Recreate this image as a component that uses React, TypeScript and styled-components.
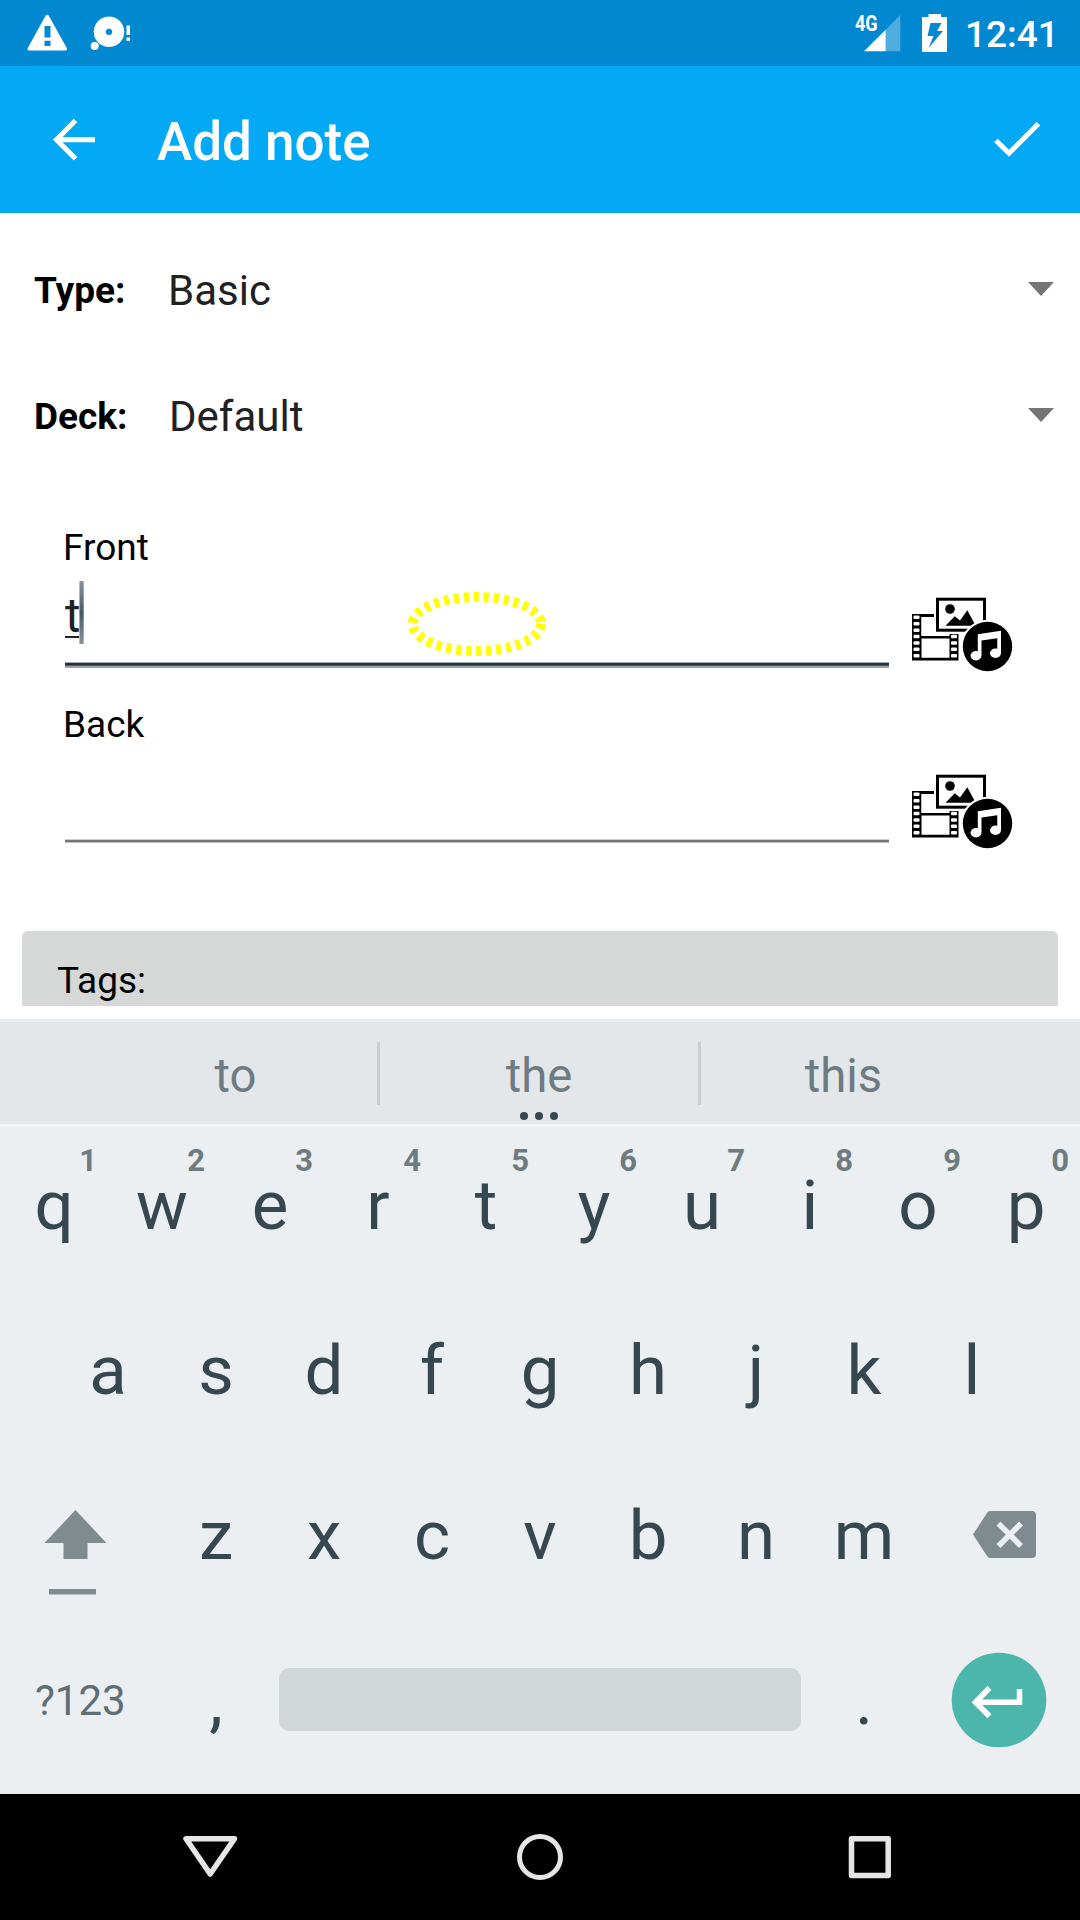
import React from "react";
import styled, { createGlobalStyle } from "styled-components";

const Global = createGlobalStyle`
  * { box-sizing: border-box; }
  body { margin: 0; background: #fff; font-family: Roboto, "Noto Sans", sans-serif; }
  svg { display: block; flex: none; }
`;

const Screen = styled.main`
  width: 1080px;
  height: 1920px;
  display: flex;
  flex-direction: column;
  overflow: hidden;
  background: #fff;
`;

const StatusBar = styled.header`
  height: 66px;
  flex: none;
  display: flex;
  justify-content: space-between;
  background: #0288d1;
  color: #fff;
`;

const StatusRight = styled.div`
  display: flex;
  padding-right: 25px;
`;

const Clock = styled.time`
  width: 90px;
  font-size: 37px;
  font-weight: 500;
  line-height: 44px;
  padding-top: 13px;
  white-space: nowrap;
`;

const Network = styled.span`
  width: 24px;
  font-size: 22px;
  font-weight: 700;
  line-height: 26px;
  padding-top: 11px;
  white-space: nowrap;
  transform: scaleX(0.82);
  transform-origin: left;
`;

const SignalIcons = styled.svg`
  overflow: visible;
`;

const Toolbar = styled.nav`
  height: 147px;
  flex: none;
  display: flex;
  align-items: center;
  background: #03a9f4;
  color: #fff;
`;

const Title = styled.h1`
  flex: 1;
  margin: 0;
  padding-top: 5px;
  font-size: 53px;
  line-height: 62px;
  font-weight: 500;
`;

const Form = styled.section`
  height: 806px;
  flex: none;
  overflow: hidden;
  padding-top: 12px;
`;

const Content = styled.div`
  height: 781px;
  overflow: hidden;
`;

const SelectRow = styled.div`
  height: 126px;
  display: flex;
  padding: 39px 26px 0 34px;
`;

const SelectLabel = styled.span`
  width: 134px;
  padding-top: 5px;
  font-size: 37px;
  line-height: 44px;
  font-weight: 700;
  color: #000;
`;

const SelectValue = styled.span<{ $inset?: number }>`
  flex: 1;
  padding-left: ${(p) => p.$inset ?? 0}px;
  padding-top: 2px;
  font-size: 42px;
  line-height: 50px;
  color: #212121;
`;

const Caret = styled.i`
  width: 26px;
  height: 14px;
  margin-top: 18px;
  background: #757575;
  clip-path: polygon(0 0, 100% 0, 50% 100%);
`;

const Fields = styled.div`
  padding: 49px 59px 0 63px;
`;

const Field = styled.div`
  height: 177px;
`;

const FieldLabel = styled.label`
  display: block;
  font-size: 37px;
  line-height: 44px;
  height: 43px;
  color: #000;
`;

const FieldRow = styled.div`
  display: flex;
`;

const Input = styled.div<{ $focus?: boolean }>`
  position: relative;
  flex: none;
  width: 824px;
  height: ${(p) => (p.$focus ? 99 : 97)}px;
  margin-left: 2px;
  padding-top: 12px;
  display: flex;
`;

const FocusLine = styled.div`
  position: absolute;
  left: 0;
  right: 0;
  bottom: 0;
  height: 6px;
  background: linear-gradient(#a3aeb3 0 1px, #263238 1px 3px, #485961 3px 4px, #97a5ac 4px 6px);
`;

const IdleLine = styled.div`
  position: absolute;
  left: 0;
  right: 0;
  bottom: 0;
  height: 4px;
  background: linear-gradient(#cfcfcf 0 1px, #757575 1px 3px, #bdbdbd 3px 4px);
`;

const Typed = styled.span`
  height: 63px;
  padding-top: 7px;
  font-size: 47.25px;
  line-height: 56px;
  color: #212121;
  text-decoration: underline;
  text-decoration-thickness: 2px;
  text-underline-offset: 4px;
  text-decoration-skip-ink: none;
`;

const Cursor = styled.i`
  width: 5px;
  height: 63px;
  margin-left: -1px;
  background: linear-gradient(90deg, rgba(255,255,255,.45) 0 1px, transparent 1px 4px, rgba(255,255,255,.3) 4px),
    linear-gradient(#87949b, #455a64 50%, #87949b);
`;

const MediaButton = styled.button`
  border: 0;
  padding: 0;
  margin: 21px 0 0 16px;
  height: 90px;
  background: none;
`;

const TouchHint = styled.svg`
  position: absolute;
  left: 340px;
  top: 14px;
`;

const Tags = styled.div`
  height: 100px;
  margin: 51px 22px 0;
  padding: 28px 35px;
  border-radius: 6px;
  background: #d6d8d7;
  font-size: 37px;
  line-height: 44px;
  color: #000;
`;

const Keyboard = styled.section`
  height: 775px;
  flex: none;
  display: flex;
  flex-direction: column;
  background: #eceff1;
`;

const Suggestions = styled.div`
  height: 108px;
  flex: none;
  display: flex;
  justify-content: center;
  border-top: 3px solid #eceff1;
  border-bottom: 3px solid #f3f5f7;
  background: #e3e7e9;
`;

const Suggestion = styled.div<{ $width: number }>`
  width: ${(p) => p.$width}px;
  display: flex;
  flex-direction: column;
  align-items: center;
  padding-top: 26px;
  font-size: 47.25px;
  line-height: 56px;
  color: #6e7b80;
`;

const Divider = styled.i`
  width: 3px;
  height: 63px;
  margin-top: 20px;
  background: #c9ced1;
`;

const Dots = styled.span`
  display: flex;
  gap: 7px;
  margin-top: 8px;
`;

const Dot = styled.i`
  width: 8px;
  height: 8px;
  border-radius: 50%;
  background: #37474f;
`;

const KeyRow = styled.div`
  height: 165px;
  flex: none;
  display: flex;
  justify-content: center;
`;

const Key = styled.div`
  position: relative;
  width: 108px;
  padding-top: 38px;
  text-align: center;
  font-size: 69px;
  line-height: 82px;
  color: #37474f;
`;

const KeyHint = styled.span`
  position: absolute;
  right: 11px;
  top: 16px;
  font-size: 31px;
  line-height: 36px;
  font-weight: 700;
  color: #6e7b80;
`;

const SideKey = styled.div`
  width: 162px;
`;

const SymbolKey = styled.div`
  width: 162px;
  padding: 54px 0 0 35px;
  font-size: 42px;
  line-height: 50px;
  color: #5f6e74;
`;

const SpaceBar = styled.div`
  width: 522px;
  height: 63px;
  margin: 46px 9px 0;
  border-radius: 10px;
  background: #d1d6d9;
`;

const NavBar = styled.footer`
  height: 126px;
  flex: none;
  background: #000;
  display: flex;
  justify-content: center;
  gap: 222px;
  padding-top: 9px;
`;

const leftHoles = [0, 1, 2, 3, 4, 5, 6].map((i) => 615.6 + i * 6.4);
const rightHoles = leftHoles.slice(3);

const MediaIcon = () => (
  <svg width="116" height="90" viewBox="905 590 116 90">
    <path d="M912 614H934v3h-12.500v19h28v-2h9v26.500h-46.500z" />
    <path d="M921.500 617h14.500v19h-14.500zM921.500 638.500h28v19.300h-28z" fill="#fff" />
    <g fill="#fff">
      {leftHoles.map((y) => (
        <rect key={y} x="913.500" y={y} width="6" height="3.500" rx="1" />
      ))}
      {rightHoles.map((y) => (
        <rect key={y} x="951" y={y} width="6" height="3.500" rx="1" />
      ))}
    </g>
    <rect x="934" y="596" width="53" height="37.500" fill="#fff" />
    <rect x="937.500" y="599.200" width="47" height="31" fill="#fff" stroke="#000" strokeWidth="3" />
    <circle cx="950" cy="609" r="4.800" />
    <path d="M945.500 625.700l9.200-9.500 5.300 4.300 7.300-10.300 8 14.800v.7z" />
    <circle cx="987.500" cy="646.500" r="26.800" fill="#fff" />
    <circle cx="987.500" cy="646.500" r="24.700" />
    <g fill="#fff">
      <path d="M977.800 634.300l23.200-3.500v22h-3.700v-14.500l-15.800 2.200v14.500h-3.700z" />
      <ellipse cx="976" cy="655.700" rx="5.500" ry="4.700" />
      <ellipse cx="995.500" cy="653.300" rx="5.500" ry="4.700" />
    </g>
  </svg>
);

const rowOne = "qwertyuiop".split("");
const rowTwo = "asdfghjkl".split("");
const rowThree = "zxcvbnm".split("");

export default function App() {
  return (
    <Screen>
      <Global />
      <StatusBar>
        <svg width="200" height="66" fill="#fff">
          <path fillRule="evenodd" d="M45.700 15.500q1.500-1.500 3 0L67 48.500q.5 2-1.500 2H29q-2 0-1.500-2zM44.500 26v11.500h6V26zM44.500 40.700v5.300h6v-5.300z" />
          <path fillRule="evenodd" d="M109 16.500a15.300 15.300 0 1 0 .01 0zM109 28.500a3.300 3.300 0 1 1-.01 0z" />
          <circle cx="94.700" cy="46" r="4" />
          <path d="M126.500 25.500h3.500v9.500h-3.500zM126.500 37.500h3.500v3.500h-3.500z" />
        </svg>
        <StatusRight>
          <Network>4G</Network>
          <SignalIcons width="86" height="66" viewBox="879 0 86 66" fill="#fff">
            <path d="M900.300 15v36.300h-14.600V29.700z" opacity=".3" />
            <path d="M885.700 29.700v21.600H864z" />
            <path fillRule="evenodd" d="M928.500 14h12.500v3h6v35h-25V17h6.500zM930.500 23l-3 13h6l-5 12 14.500-17h-6l4.500-8z" />
          </SignalIcons>
          <Clock>12:41</Clock>
        </StatusRight>
      </StatusBar>
      <Toolbar>
        <svg width="157" height="147" viewBox="0 66 157 147" fill="none" stroke="#fff" strokeWidth="5">
          <path d="M95 139.700H57M75.500 120.500L56.500 139.700l19 19" />
        </svg>
        <Title>Add note</Title>
        <svg width="100" height="147" viewBox="980 66 100 147" fill="none" stroke="#fff" strokeWidth="5">
          <path d="M996 140.500l13 12.800 29.500-29.500" />
        </svg>
      </Toolbar>
      <Form>
        <Content>
          <SelectRow>
            <SelectLabel>Type:</SelectLabel>
            <SelectValue>Basic</SelectValue>
            <Caret />
          </SelectRow>
          <SelectRow>
            <SelectLabel>Deck:</SelectLabel>
            <SelectValue $inset={1}>Default</SelectValue>
            <Caret />
          </SelectRow>
          <Fields>
            <Field>
              <FieldLabel>Front</FieldLabel>
              <FieldRow>
                <Input $focus>
                  <Typed>t</Typed>
                  <Cursor />
                  <TouchHint width="144" height="74" viewBox="405 583 144 74">
                    <ellipse cx="476.800" cy="624" rx="64" ry="27" fill="none" stroke="#ff0" strokeWidth="10" strokeDasharray="5 5" />
                  </TouchHint>
                  <FocusLine />
                </Input>
                <MediaButton><MediaIcon /></MediaButton>
              </FieldRow>
            </Field>
            <Field>
              <FieldLabel>Back</FieldLabel>
              <FieldRow>
                <Input><IdleLine /></Input>
                <MediaButton><MediaIcon /></MediaButton>
              </FieldRow>
            </Field>
          </Fields>
          <Tags>Tags:</Tags>
        </Content>
      </Form>
      <Keyboard>
        <Suggestions>
          <Suggestion $width={283}>to</Suggestion>
          <Divider />
          <Suggestion $width={318}>
            the
            <Dots><Dot /><Dot /><Dot /></Dots>
          </Suggestion>
          <Divider />
          <Suggestion $width={285}>this</Suggestion>
        </Suggestions>
        <KeyRow>
          {rowOne.map((k, i) => (
            <Key key={k}>{k}<KeyHint>{(i + 1) % 10}</KeyHint></Key>
          ))}
        </KeyRow>
        <KeyRow>{rowTwo.map((k) => <Key key={k}>{k}</Key>)}</KeyRow>
        <KeyRow>
          <SideKey>
            <svg width="162" height="165" viewBox="0 1457 162 165" fill="#808b8f">
              <path d="M75.500 1510l31 33H87.500v16h-24v-16H44.500zM49 1589h47v5.500H49z" />
            </svg>
          </SideKey>
          {rowThree.map((k) => <Key key={k}>{k}</Key>)}
          <SideKey>
            <svg width="162" height="165" viewBox="918 1457 162 165">
              <path d="M990 1511h42q4 0 4 4v39q0 4-4 4h-42q-2 0-3-2l-14-21.500 14-21.500q1-2 3-2z" fill="#808b8f" />
              <path d="M998.500 1523.500l22.500 22.500M1021 1523.500l-22.500 22.500" stroke="#eceff1" strokeWidth="5.500" />
            </svg>
          </SideKey>
        </KeyRow>
        <KeyRow>
          <SymbolKey>?123</SymbolKey>
          <Key>,</Key>
          <SpaceBar />
          <Key>.</Key>
          <SideKey>
            <svg width="162" height="165" viewBox="918 1622 162 165">
              <circle cx="999" cy="1700" r="47.300" fill="#4db6ac" />
              <path d="M1019.500 1689v13.200H976M989.500 1688l-14 14.200 14 14" fill="none" stroke="#fff" strokeWidth="5.500" />
            </svg>
          </SideKey>
        </KeyRow>
      </Keyboard>
      <NavBar>
        <svg width="108" height="108" viewBox="156 1803 108 108" fill="none" stroke="#e6e6e6" strokeWidth="5.500" strokeLinejoin="round">
          <path d="M186 1838.700h48.500L210.200 1874z" />
        </svg>
        <svg width="108" height="108" viewBox="486 1803 108 108" fill="none" stroke="#e6e6e6" strokeWidth="5">
          <circle cx="540" cy="1857" r="20.500" />
        </svg>
        <svg width="108" height="108" viewBox="816 1803 108 108" fill="none" stroke="#e6e6e6" strokeWidth="5.500" strokeLinejoin="round">
          <rect x="851.500" y="1838.700" width="36.700" height="36.700" />
        </svg>
      </NavBar>
    </Screen>
  );
}
